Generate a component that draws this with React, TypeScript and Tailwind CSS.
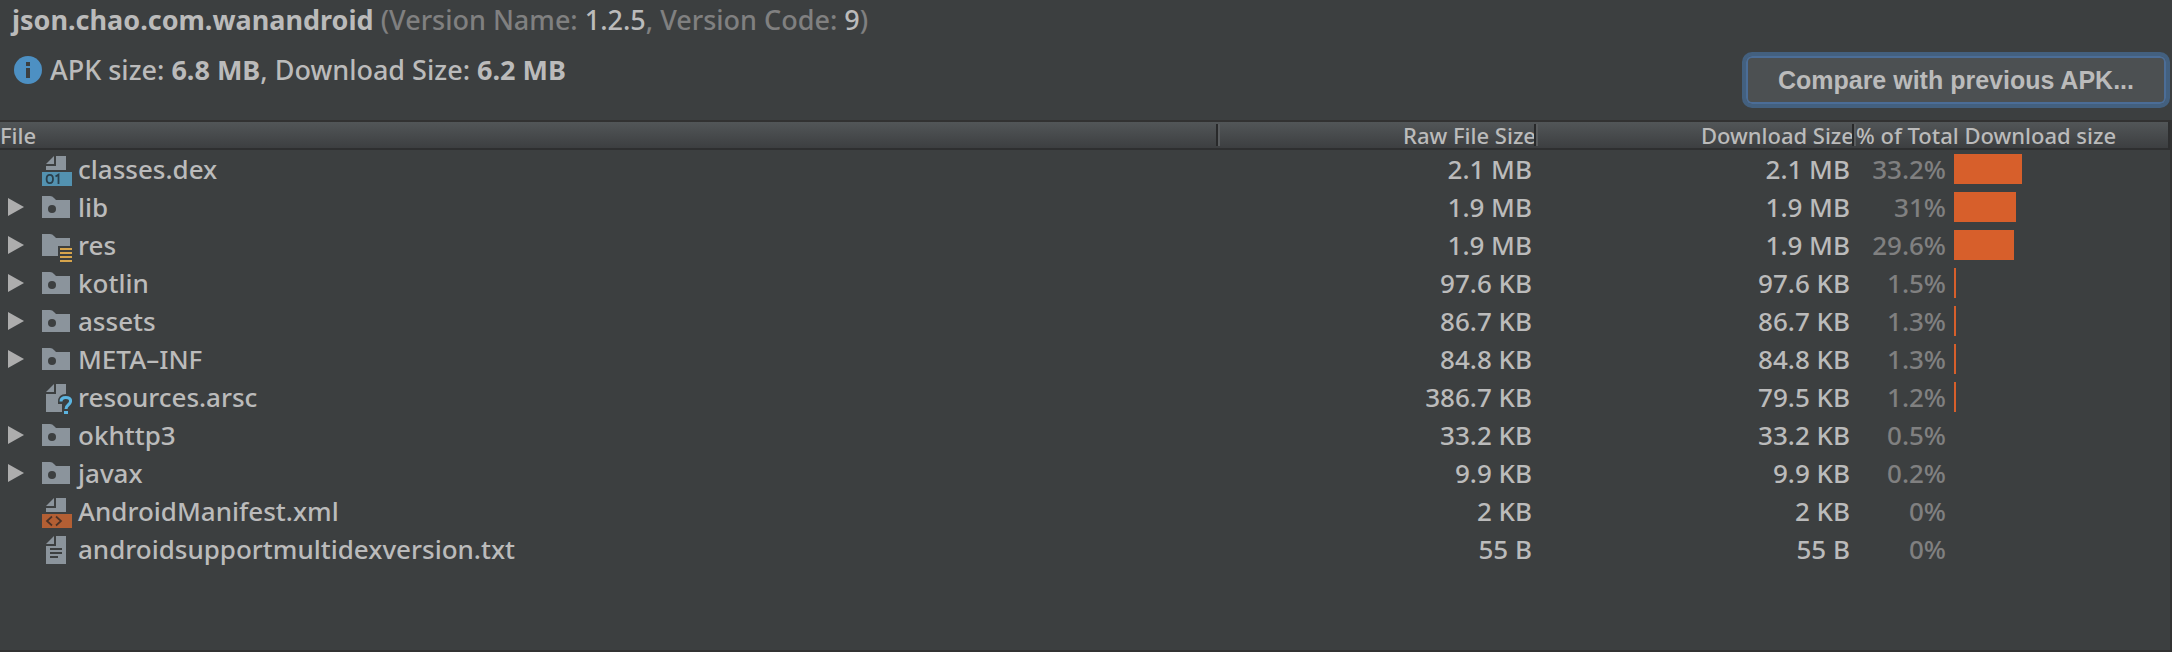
import { useState } from "react";

type Kind = "dex" | "folder" | "res" | "unknown" | "manifest" | "text";

interface Entry {
  name: string;
  kind: Kind;
  raw: string;
  download: string;
  percent: string;
  bar: number;
}

const entries: Entry[] = [
  { name: "classes.dex", kind: "dex", raw: "2.1 MB", download: "2.1 MB", percent: "33.2%", bar: 68 },
  { name: "lib", kind: "folder", raw: "1.9 MB", download: "1.9 MB", percent: "31%", bar: 62 },
  { name: "res", kind: "res", raw: "1.9 MB", download: "1.9 MB", percent: "29.6%", bar: 60 },
  { name: "kotlin", kind: "folder", raw: "97.6 KB", download: "97.6 KB", percent: "1.5%", bar: 2 },
  { name: "assets", kind: "folder", raw: "86.7 KB", download: "86.7 KB", percent: "1.3%", bar: 2 },
  { name: "META–INF", kind: "folder", raw: "84.8 KB", download: "84.8 KB", percent: "1.3%", bar: 2 },
  { name: "resources.arsc", kind: "unknown", raw: "386.7 KB", download: "79.5 KB", percent: "1.2%", bar: 2 },
  { name: "okhttp3", kind: "folder", raw: "33.2 KB", download: "33.2 KB", percent: "0.5%", bar: 0 },
  { name: "javax", kind: "folder", raw: "9.9 KB", download: "9.9 KB", percent: "0.2%", bar: 0 },
  { name: "AndroidManifest.xml", kind: "manifest", raw: "2 KB", download: "2 KB", percent: "0%", bar: 0 },
  { name: "androidsupportmultidexversion.txt", kind: "text", raw: "55 B", download: "55 B", percent: "0%", bar: 0 },
];

const GREY = "#8b949c";
const BACK = "#3c3f40";

function FileIcon({ kind }: { kind: Kind }) {
  return (
    <svg viewBox="0 0 32 34" className="h-[34px] w-8 shrink-0" aria-hidden="true">
      {(kind === "folder" || kind === "res") && (
        <path d="M2 6h8q2.500 0 4 2l2 2h14v18H2z" fill={GREY} />
      )}
      {kind === "folder" && <circle cx="12" cy="19" r="4" fill={BACK} />}
      {kind === "res" && (
        <>
          <path d="M18 18h14v16H18z" fill={BACK} />
          <path d="M20 20h12v2H20zM20 24h12v2H20zM20 28h12v2H20zM20 32h12v2H20z" fill="#d6a44c" />
        </>
      )}
      {(kind === "dex" || kind === "manifest") && (
        <>
          <path d="M14 4v8H6zM16 4h10v14H6v-4h10z" fill={GREY} />
          <path d="M2 20h30v14H2z" fill={kind === "dex" ? "#5392b0" : "#b35f34"} />
        </>
      )}
      {kind === "dex" && (
        <path
          d="M9.800 22.900c2.200 0 3.200 1.700 3.200 4.100s-1 4.100-3.200 4.100-3.200-1.700-3.200-4.100 1-4.100 3.200-4.100zM15.500 24.500l3-1.800v9.300"
          fill="none" stroke="#2a404c" strokeWidth="1.800"
        />
      )}
      {kind === "manifest" && (
        <path d="M12 22.500L7 27l5 4.500M16 22.500L21 27l-5 4.500" fill="none" stroke="#4b3227" strokeWidth="1.700" />
      )}
      {(kind === "unknown" || kind === "text") && (
        <path d="M14 4v8H6zM16 4h10v28H6V14h10z" fill={GREY} />
      )}
      {kind === "text" && <path d="M10 16h12v2H10zM10 20h12v2H10zM10 24h8v2h-8z" fill={BACK} />}
      {kind === "unknown" && (
        <>
          <path d="M18 22q0-8 8-8l6 4v16H22V24h-4z" fill={BACK} />
          <path d="M21 21.500q0-4 4.800-4t4.800 3.500c0 4-4.600 3.500-4.600 8" fill="none" stroke="#5bb4e0" strokeWidth="3" />
          <path d="M24 31h4v3h-4z" fill="#5bb4e0" />
        </>
      )}
    </svg>
  );
}

function InfoIcon() {
  return (
    <svg viewBox="0 0 28 28" className="size-7 shrink-0" aria-hidden="true">
      <circle cx="14" cy="14" r="14" fill="#4d90c3" />
      <path d="M12 6h4v4h-4zM12 12h4v10h-4z" fill={BACK} />
    </svg>
  );
}

function Divider() {
  return <span className="absolute right-0 top-0.5 h-[22px] w-1 border-l-2 border-r-2 border-l-[#28292a] border-r-[#595c5e]" />;
}

export default function App() {
  const [open, setOpen] = useState<string[]>([]);
  const toggle = (name: string) =>
    setOpen((now) => (now.includes(name) ? now.filter((n) => n !== name) : [...now, name]));

  return (
    <main className="flex min-h-screen flex-col bg-[#3c3f40] font-['Noto_Sans','Lucida_Grande',sans-serif] text-[26px] font-medium leading-8 text-[#bbbbbb]">
      <header className="flex h-[120px] items-start justify-between pl-3 pr-0.5">
        <div className="flex flex-col gap-[18px] pt-1 text-[27px] leading-8">
          <h1 className="text-[#808080]">
            <strong className="font-bold text-[#bbbbbb]">json.chao.com.wanandroid</strong> (Version Name:{" "}
            <span className="text-[#bbbbbb]">1.2.5</span>, Version Code: <span className="text-[#bbbbbb]">9</span>)
          </h1>
          <p className="flex items-center gap-2 pl-0.5">
            <InfoIcon />
            <span>
              APK size: <strong>6.8 MB</strong>, Download Size: <strong>6.2 MB</strong>
            </span>
          </p>
        </div>
        <button
          type="button"
          className="mt-[52px] h-14 rounded-[10px] border-4 border-[#43607f] bg-[#4c5052] px-8 font-['Liberation_Sans',Arial,sans-serif] text-[25px] font-bold text-[#bbbbbb] outline-none ring-2 ring-inset ring-[#4b6d97]"
        >
          Compare with previous APK...
        </button>
      </header>

      <div className="grow border-y-2 border-r-2 border-[#323232]">
        <table className="w-full table-fixed border-separate border-spacing-0">
          <colgroup>
            <col />
            <col className="w-[318px]" />
            <col className="w-[318px]" />
            <col className="w-[314px]" />
          </colgroup>
          <thead className="text-[22px] leading-[26px]">
            <tr className="bg-linear-to-b from-[#525658] to-[#3b3d3f]">
              <th className="relative border-b-2 border-[#2e2f30] p-0 text-left font-medium">File<Divider /></th>
              <th className="relative border-b-2 border-[#2e2f30] p-0 pr-0.5 text-right font-medium">Raw File Size<Divider /></th>
              <th className="relative border-b-2 border-[#2e2f30] p-0 pr-0.5 text-right font-medium">Download Size<Divider /></th>
              <th className="whitespace-nowrap border-b-2 border-r-2 border-[#2e2f30] p-0 text-left font-medium">% of Total Download size</th>
            </tr>
          </thead>
          <tbody>
            {entries.map((e) => (
              <tr key={e.name} className="h-[38px]">
                <td className="p-0">
                  <div className="flex h-[38px] items-center gap-1">
                    {e.kind === "folder" || e.kind === "res" ? (
                      <button
                        type="button"
                        aria-label={`Expand ${e.name}`}
                        aria-expanded={open.includes(e.name)}
                        onClick={() => toggle(e.name)}
                        className="w-8 shrink-0 pl-2"
                      >
                        <svg viewBox="0 0 16 18" className="block h-[18px] w-4" aria-hidden="true">
                          <path d="M0 0l16 9-16 9z" fill="#adadad" />
                        </svg>
                      </button>
                    ) : (
                      <span className="w-8 shrink-0" />
                    )}
                    <span className="flex items-center gap-1.5 pl-1">
                      <FileIcon kind={e.kind} />
                      {e.name}
                    </span>
                  </div>
                </td>
                <td className="p-0 pr-1.5 text-right">{e.raw}</td>
                <td className="p-0 pr-1.5 text-right">{e.download}</td>
                <td className="p-0">
                  <div className="flex h-[38px] items-center gap-2">
                    <span className="w-[90px] text-right text-[#808080]">{e.percent}</span>
                    <span className="h-[30px] bg-[#d75f2b]" style={{ width: e.bar }} />
                  </div>
                </td>
              </tr>
            ))}
          </tbody>
        </table>
      </div>
    </main>
  );
}
